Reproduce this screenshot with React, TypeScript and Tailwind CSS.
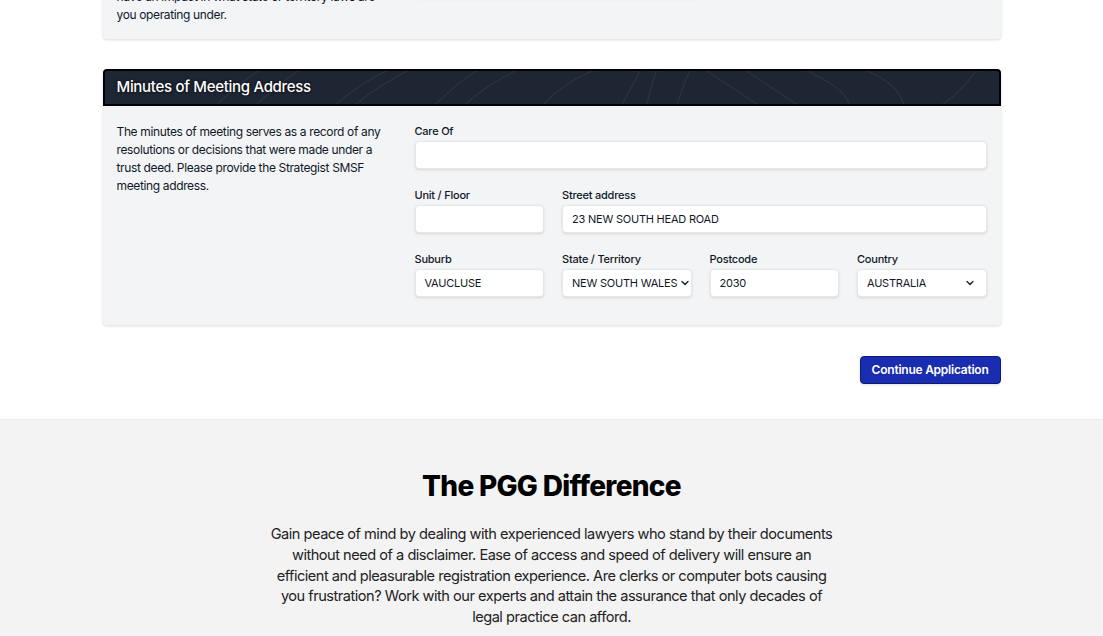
import { ChevronDown } from 'lucide-react';

const font = { fontFamily: 'Inter, "Noto Sans", sans-serif' };

function Label({ children }: { children: React.ReactNode }) {
  return <label className="block text-[11px] leading-4 font-medium text-gray-900 mb-[2px] tracking-[-0.02em]">{children}</label>;
}

function TextInput({ value = '' }: { value?: string }) {
  return (
    <div className="h-7 bg-white border border-gray-200 rounded shadow-sm flex items-center px-[9px] text-[11px] text-gray-900 uppercase tracking-[-0.02em]">
      {value}
    </div>
  );
}

function SelectInput({ value, tight }: { value: string; tight?: boolean }) {
  return (
    <div className="h-7 bg-white border border-gray-200 rounded shadow-sm flex items-center pl-[9px] pr-[10px] text-[11px] text-gray-900 uppercase tracking-[-0.02em]">
      <span className={tight ? 'whitespace-nowrap' : 'flex-1 whitespace-nowrap'}>{value}</span>
      <ChevronDown className={tight ? 'w-3 h-3 ml-0.5 shrink-0' : 'w-3 h-3 ml-auto shrink-0'} strokeWidth={2.5} />
    </div>
  );
}

function Contours() {
  return (
    <svg className="absolute inset-0 w-full h-full" viewBox="0 0 900 37" preserveAspectRatio="none" fill="none">
      <g stroke="rgba(255,255,255,0.07)" strokeWidth="1.2">
        <path d="M230 40 C250 20 265 10 290 -4" />
        <path d="M250 40 C268 22 285 12 310 -4" />
        <path d="M330 40 C345 25 360 8 380 -4" />
        <path d="M360 40 C380 20 395 10 420 -4" />
        <path d="M440 40 C450 25 470 8 500 -4" />
        <path d="M520 40 C525 25 535 10 540 -4" />
        <path d="M545 40 C548 25 552 10 556 -4" />
        <path d="M575 40 C580 22 585 10 590 -4" />
        <path d="M600 -4 C620 10 640 25 660 40" />
        <path d="M640 -4 C660 10 675 22 700 40" />
        <path d="M700 -4 C720 8 745 18 750 40" />
        <path d="M760 -4 C790 10 800 22 805 40" />
        <path d="M840 40 C860 25 870 10 880 -4" />
        <path d="M150 40 C170 20 180 10 200 -4" />
        <path d="M110 40 C130 20 140 10 160 -4" />
      </g>
    </svg>
  );
}

export default function App() {
  return (
    <div className="bg-white overflow-hidden h-[636px]" style={font}>
      <div className="max-w-[898px] mx-auto -mt-[65px]">
        {/* 이전 카드 (잘림) */}
        <div className="bg-[#f3f4f6] rounded-b shadow-[0_1px_3px_rgba(0,0,0,0.15)] px-[14px] pt-[17px] pb-[15px]">
          <div className="grid grid-cols-3 gap-x-6">
            <p className="text-xs leading-[18px] text-gray-900 tracking-[-0.03em] whitespace-nowrap">
              The state where the trust is established will<br />
              affect its governing law and this can<br />
              have an impact in what state or territory laws are<br />
              you operating under.
            </p>
            <div className="col-span-2">
              <div className="w-[285px]">
                <Label>State of Registration</Label>
                <SelectInput value="NEW SOUTH WALES" />
              </div>
            </div>
          </div>
        </div>

        {/* Minutes of Meeting Address */}
        <div className="mt-[30px] rounded shadow-[0_1px_3px_rgba(0,0,0,0.15)] bg-[#f3f4f6]">
          <div className="relative h-[37px] bg-[#1e2533] border-2 border-black rounded-t flex items-center px-3 overflow-hidden">
            <Contours />
            <h2 className="relative text-[15px] font-medium text-white tracking-[-0.02em] [text-shadow:0_0_3px_#000]">
              Minutes of Meeting Address
            </h2>
          </div>
          <div className="px-[14px] pt-[17px] pb-[28px] grid grid-cols-3 gap-x-6">
            <p className="text-xs leading-[18px] text-gray-900 tracking-[-0.03em]">
              The minutes of meeting serves as a record of any resolutions or decisions that were made under a trust deed. Please provide the Strategist SMSF meeting address.
            </p>
            <div className="col-span-2 grid grid-cols-4 gap-x-[18px] gap-y-[18px]">
              <div className="col-span-4">
                <Label>Care Of</Label>
                <TextInput />
              </div>
              <div>
                <Label>Unit / Floor</Label>
                <TextInput />
              </div>
              <div className="col-span-3">
                <Label>Street address</Label>
                <TextInput value="23 New South Head Road" />
              </div>
              <div>
                <Label>Suburb</Label>
                <TextInput value="Vaucluse" />
              </div>
              <div>
                <Label>State / Territory</Label>
                <SelectInput value="New South Wales" tight />
              </div>
              <div>
                <Label>Postcode</Label>
                <TextInput value="2030" />
              </div>
              <div>
                <Label>Country</Label>
                <SelectInput value="Australia" />
              </div>
            </div>
          </div>
        </div>

        <div className="flex justify-end mt-[31px]">
          <button className="h-7 px-[11px] rounded bg-[#1a2db0] border border-[#0d1a7a] text-white text-xs font-semibold tracking-[-0.02em] shadow-sm">
            Continue Application
          </button>
        </div>
      </div>

      {/* The PGG Difference */}
      <section className="mt-[35px] bg-[#f3f3f4] border-t border-[#ececec] pt-[49px] pb-16">
        <h2 className="text-center text-[28px] leading-[34px] font-extrabold text-black tracking-tight">
          The PGG Difference
        </h2>
        <p className="mt-[21px] max-w-[620px] mx-auto text-center text-[14.6px] leading-[20.75px] text-[#222] tracking-[-0.034em]">
          Gain peace of mind by dealing with experienced lawyers who stand by their documents<br />
          without need of a disclaimer. Ease of access and speed of delivery will ensure an<br />
          efficient and pleasurable registration experience. Are clerks or computer bots causing<br />
          you frustration? Work with our experts and attain the assurance that only decades of<br />
          legal practice can afford.
        </p>
      </section>
    </div>
  );
}
